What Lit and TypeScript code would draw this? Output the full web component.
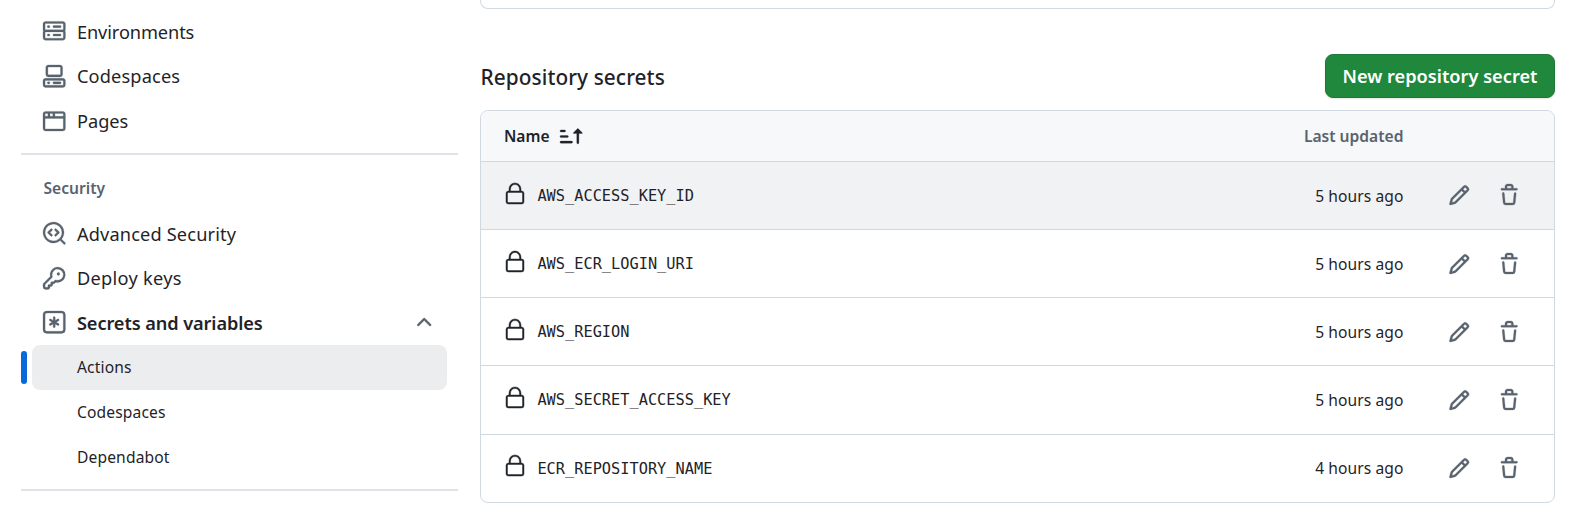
import { LitElement, html, css, svg } from "lit";
import { customElement, property } from "lit/decorators.js";

const ICONS: Record<string, string> = {
  server:
    "M1.75 1h12.5c.966 0 1.75.784 1.75 1.75v4c0 .372-.116.717-.314 1 .198.283.314.628.314 1v4a1.75 1.75 0 0 1-1.75 1.75H1.75A1.75 1.75 0 0 1 0 12.75v-4c0-.358.109-.707.314-1a1.739 1.739 0 0 1-.314-1v-4C0 1.784.784 1 1.75 1ZM1.5 2.75v4c0 .138.112.25.25.25h12.5a.25.25 0 0 0 .25-.25v-4a.25.25 0 0 0-.25-.25H1.75a.25.25 0 0 0-.25.25Zm.25 5.75a.25.25 0 0 0-.25.25v4c0 .138.112.25.25.25h12.5a.25.25 0 0 0 .25-.25v-4a.25.25 0 0 0-.25-.25ZM7 4.75A.75.75 0 0 1 7.75 4h4.5a.75.75 0 0 1 0 1.5h-4.5A.75.75 0 0 1 7 4.75ZM7.75 10h4.5a.75.75 0 0 1 0 1.5h-4.5a.75.75 0 0 1 0-1.5ZM3 4.75A.75.75 0 0 1 3.75 4h.5a.75.75 0 0 1 0 1.5h-.5A.75.75 0 0 1 3 4.75ZM3.75 10h.5a.75.75 0 0 1 0 1.5h-.5a.75.75 0 0 1 0-1.5Z",
  codespaces:
    "M0 11.25c0-.966.784-1.75 1.75-1.75h12.5c.966 0 1.75.784 1.75 1.75v3A1.75 1.75 0 0 1 14.25 16H1.75A1.75 1.75 0 0 1 0 14.25Zm2-9.5C2 .784 2.784 0 3.75 0h8.5C13.216 0 14 .784 14 1.75v5a1.75 1.75 0 0 1-1.75 1.75h-8.5A1.75 1.75 0 0 1 2 6.75Zm1.75-.25a.25.25 0 0 0-.25.25v5c0 .138.112.25.25.25h8.5a.25.25 0 0 0 .25-.25v-5a.25.25 0 0 0-.25-.25Zm-2 9.5a.25.25 0 0 0-.25.25v3c0 .138.112.25.25.25h12.5a.25.25 0 0 0 .25-.25v-3a.25.25 0 0 0-.25-.25ZM7 12.75a.75.75 0 0 1 .75-.75h4.5a.75.75 0 0 1 0 1.5h-4.5a.75.75 0 0 1-.75-.75Zm-4 0a.75.75 0 0 1 .75-.75h.5a.75.75 0 0 1 0 1.5h-.5a.75.75 0 0 1-.75-.75Z",
  browser:
    "M0 2.75C0 1.784.784 1 1.75 1h12.5c.966 0 1.75.784 1.75 1.75v10.5A1.75 1.75 0 0 1 14.25 15H1.75A1.75 1.75 0 0 1 0 13.25ZM14.5 6h-13v7.25c0 .138.112.25.25.25h12.5a.25.25 0 0 0 .25-.25Zm-6-3.5v2h6V2.75a.25.25 0 0 0-.25-.25ZM5 2.5v2h2v-2Zm-3.25 0a.25.25 0 0 0-.25.25V4.5h2v-2Z",
  codescan:
    "M8.47 4.97a.75.75 0 0 0 0 1.06L9.94 7.5 8.47 8.97a.75.75 0 1 0 1.06 1.06l2-2a.75.75 0 0 0 0-1.06l-2-2a.75.75 0 0 0-1.06 0ZM6.53 6.03a.75.75 0 0 0-1.06-1.06l-2 2a.75.75 0 0 0 0 1.06l2 2a.75.75 0 1 0 1.06-1.06L5.06 7.5l1.47-1.47ZM12.246 13.307a7.501 7.501 0 1 1 1.06-1.06l2.474 2.473a.749.749 0 0 1-.326 1.275.749.749 0 0 1-.734-.215ZM1.5 7.5a6.002 6.002 0 0 0 3.608 5.504 6.002 6.002 0 0 0 6.486-1.117.748.748 0 0 1 .292-.293A6 6 0 1 0 1.5 7.5Z",
  key:
    "M10.5 0a5.499 5.499 0 1 1-1.288 10.848l-.932.932a.749.749 0 0 1-.53.22H7v.75a.749.749 0 0 1-.22.53l-.5.5a.749.749 0 0 1-.53.22H5v.75a.749.749 0 0 1-.22.53l-.5.5a.749.749 0 0 1-.53.22h-2A1.75 1.75 0 0 1 0 14.25v-2c0-.199.079-.389.22-.53l4.932-4.932A5.5 5.5 0 0 1 10.5 0Zm-4 5.5c-.001.431.069.86.205 1.269a.75.75 0 0 1-.181.768L1.5 12.56v1.69c0 .138.112.25.25.25h1.69l.06-.06v-1.19a.75.75 0 0 1 .75-.75h1.19l.06-.06v-1.19a.75.75 0 0 1 .75-.75h1.19l1.023-1.025a.75.75 0 0 1 .768-.18A4 4 0 1 0 6.5 5.5ZM11 6a1 1 0 1 1 0-2 1 1 0 0 1 0 2Z",
  asterisk:
    "M0 2.75A2.75 2.75 0 0 1 2.75 0h10.5A2.75 2.75 0 0 1 16 2.75v10.5A2.75 2.75 0 0 1 13.25 16H2.75A2.75 2.75 0 0 1 0 13.25ZM2.75 1.5c-.69 0-1.25.56-1.25 1.25v10.5c0 .69.56 1.25 1.25 1.25h10.5c.69 0 1.25-.56 1.25-1.25V2.75c0-.69-.56-1.25-1.25-1.25ZM8 4a.75.75 0 0 1 .75.75V6.7l1.69-.975a.75.75 0 0 1 .75 1.3L9.5 8l1.69.976a.75.75 0 0 1-.75 1.298L8.75 9.3v1.951a.75.75 0 0 1-1.5 0V9.299l-1.69.976a.75.75 0 0 1-.75-1.3L6.5 8l-1.69-.975a.75.75 0 0 1 .75-1.3l1.69.976V4.75A.75.75 0 0 1 8 4Z",
  chevron:
    "M3.22 10.53a.749.749 0 0 1 0-1.06l4.25-4.25a.749.749 0 0 1 1.06 0l4.25 4.25a.749.749 0 1 1-1.06 1.06L8 6.811 4.28 10.53a.749.749 0 0 1-1.06 0Z",
  pencil:
    "M11.013 1.427a1.75 1.75 0 0 1 2.474 0l1.086 1.086a1.75 1.75 0 0 1 0 2.474l-8.61 8.61c-.21.21-.47.364-.756.445l-3.251.93a.75.75 0 0 1-.927-.928l.929-3.25c.081-.286.235-.547.445-.758l8.61-8.61Zm.176 4.823L9.75 4.81l-6.286 6.287a.253.253 0 0 0-.064.108l-.558 1.953 1.953-.558a.253.253 0 0 0 .108-.064Zm1.238-3.763a.25.25 0 0 0-.354 0L10.811 3.75l1.439 1.44 1.263-1.263a.25.25 0 0 0 0-.354Z",
  trash:
    "M11 1.75V3h2.25a.75.75 0 0 1 0 1.5H2.75a.75.75 0 0 1 0-1.5H5V1.75C5 .784 5.784 0 6.75 0h2.5C10.216 0 11 .784 11 1.75ZM4.496 6.675l.66 6.6a.25.25 0 0 0 .249.225h5.19a.25.25 0 0 0 .249-.225l.66-6.6a.75.75 0 0 1 1.492.149l-.66 6.6A1.748 1.748 0 0 1 10.595 15h-5.19a1.75 1.75 0 0 1-1.741-1.575l-.66-6.6a.75.75 0 1 1 1.492-.15ZM6.5 1.75V3h3V1.75a.25.25 0 0 0-.25-.25h-2.5a.25.25 0 0 0-.25.25Z",
  sort:
    "m12.927 2.573 3 3A.25.25 0 0 1 15.75 6H13.5v6.75a.75.75 0 0 1-1.5 0V6H9.75a.25.25 0 0 1-.177-.427l3-3a.25.25 0 0 1 .354 0ZM0 12.25a.75.75 0 0 1 .75-.75h7.5a.75.75 0 0 1 0 1.5H.75a.75.75 0 0 1-.75-.75Zm0-4a.75.75 0 0 1 .75-.75h4.5a.75.75 0 0 1 0 1.5H.75a.75.75 0 0 1-.75-.75Zm0-4a.75.75 0 0 1 .75-.75h2.5a.75.75 0 0 1 0 1.5H.75a.75.75 0 0 1-.75-.75Z",
  lock:
    "M6 9V7.25C6 3.845 8.503 1 12 1s6 2.845 6 6.25V9h.5a2.5 2.5 0 0 1 2.5 2.5v8a2.5 2.5 0 0 1-2.5 2.5h-13A2.5 2.5 0 0 1 3 19.5v-8A2.5 2.5 0 0 1 5.5 9Zm-1.5 2.5v8a1 1 0 0 0 1 1h13a1 1 0 0 0 1-1v-8a1 1 0 0 0-1-1h-13a1 1 0 0 0-1 1Zm3-4.25V9h9V7.25c0-2.67-1.922-4.75-4.5-4.75-2.578 0-4.5 2.08-4.5 4.75Z",
};

@customElement("app-icon")
class AppIcon extends LitElement {
  @property() name = "";
  static styles = css`
    :host {
      display: block;
      flex: none;
      width: 22.4px;
      height: 22.4px;
    }
    .glyph {
      display: block;
      width: 100%;
      height: 100%;
      overflow: visible;
      fill: currentColor;
      stroke: currentColor;
      stroke-width: 0.2;
    }
    .heavy {
      stroke-width: 0.45;
    }
  `;
  render() {
    const lock = this.name === "lock";
    const box = lock ? 24 : 16;
    return html`<svg class="glyph ${lock ? "heavy" : ""}" viewBox="0 0 ${box} ${box}" aria-hidden="true">
      ${svg`<path d=${ICONS[this.name]}></path>`}
    </svg>`;
  }
}

@customElement("settings-nav")
class SettingsNav extends LitElement {
  static styles = css`
    :host {
      display: block;
      width: 437px;
      padding: 9px 0 0 21px;
      color: #1f2328;
      font-size: 18.2px;
    }
    .item {
      display: flex;
      align-items: center;
      height: 44.8px;
      padding: 0 22px;
      line-height: 28px;
    }
    .item app-icon {
      color: #59636e;
      margin: -0.6px 11.4px 0 0.2px;
    }
    .label {
      flex: 1;
      padding-top: 0.4px;
    }
    .snug {
      letter-spacing: -0.1px;
    }
    .loose {
      letter-spacing: 0.15px;
    }
    .wide {
      letter-spacing: 0.28px;
    }
    .item .chevron {
      margin-right: 1px;
    }
    .current {
      font-weight: 600;
    }
    .divider {
      height: 2px;
      background: #dfe3e8;
      margin-top: 9.6px;
    }
    .heading {
      padding: 21px 22px 0 22.5px;
      height: 35px;
      font-size: 15.6px;
      font-weight: 600;
      line-height: 25px;
      color: #59636e;
    }
    .sub {
      display: flex;
      align-items: center;
      height: 44.8px;
      font-size: 15.6px;
      letter-spacing: 0.14px;
    }
    .marker {
      width: 6px;
      height: 33px;
      border-radius: 4px;
      margin-right: 5px;
    }
    .target {
      box-sizing: border-box;
      display: flex;
      align-items: center;
      width: 415px;
      height: 45px;
      padding: 0 0 1.6px 45px;
      border-radius: 8px;
    }
    .active .marker {
      background: #0969da;
    }
    .active .target {
      background: #ecedef;
    }
  `;
  private item(icon: string, label: string, tracking = "") {
    return html`<div class="item">
      <app-icon name=${icon}></app-icon><span class="label ${tracking}">${label}</span>
    </div>`;
  }
  private sub(label: string, active = false) {
    return html`<div class="sub ${active ? "active" : ""}">
      <span class="marker"></span><span class="target">${label}</span>
    </div>`;
  }
  render() {
    return html`
      ${this.item("server", "Environments", "snug")}
      ${this.item("codespaces", "Codespaces", "loose")}
      ${this.item("browser", "Pages")}
      <div class="divider"></div>
      <div class="heading">Security</div>
      ${this.item("codescan", "Advanced Security", "loose")}
      ${this.item("key", "Deploy keys", "wide")}
      <div class="item">
        <app-icon name="asterisk"></app-icon>
        <span class="label current snug">Secrets and variables</span>
        <app-icon class="chevron" name="chevron"></app-icon>
      </div>
      ${this.sub("Actions", true)} ${this.sub("Codespaces")} ${this.sub("Dependabot")}
      <div class="divider"></div>
    `;
  }
}

@customElement("secrets-panel")
class SecretsPanel extends LitElement {
  static styles = css`
    :host {
      display: block;
      width: 1075px;
      color: #1f2328;
      font-size: 15.6px;
    }
    .previous {
      box-sizing: border-box;
      height: 9px;
      border: 1px solid #d1d9e0;
      border-top: 0;
      border-radius: 0 0 8px 8px;
    }
    .top {
      display: flex;
      align-items: center;
      justify-content: space-between;
      margin: 45px 0 12px;
    }
    .title {
      margin: 0;
      padding: 2px 0 0 0.5px;
      font-size: 20.8px;
      font-weight: 550;
      line-height: 30px;
      letter-spacing: 0.08px;
    }
    .create {
      box-sizing: border-box;
      width: 230px;
      height: 44px;
      padding: 0;
      border: 1px solid #1f783a;
      border-radius: 8px;
      background: #1f883d;
      color: #fff;
      font: 600 18.2px/28px "Noto Sans", "Open Sans", sans-serif;
      box-shadow: 0 1px 2px rgba(31, 35, 40, 0.12);
    }
    .table {
      border: 1px solid #d1d9e0;
      border-radius: 8px;
      overflow: hidden;
    }
    .row {
      display: grid;
      grid-template-columns: 1fr 250px 44.6px 22.4px 27.6px 22.4px;
      align-items: center;
      height: 67.15px;
      padding: 0 33.6px 0 23px;
      border-top: 1px solid #d1d9e0;
    }
    .head {
      height: 50px;
      border-top: 0;
      background: #f6f8fa;
      font-weight: 600;
    }
    .hovered {
      background: #f1f2f4;
    }
    .name {
      display: flex;
      align-items: center;
    }
    .head .name {
      gap: 10px;
    }
    .lock {
      width: 24px;
      height: 24px;
      margin: -4px 10.4px 0 -1px;
    }
    .secret {
      font-family: "DejaVu Sans Mono", monospace;
      font-size: 15.3px;
      padding-top: 1px;
    }
    .when {
      grid-column: 2;
      text-align: right;
      letter-spacing: 0.07px;
    }
    .head .when {
      color: #59636e;
      letter-spacing: 0;
    }
    .edit {
      grid-column: 4;
      color: #59636e;
    }
    .remove {
      grid-column: 6;
      color: #59636e;
    }
  `;
  private secrets = [
    { name: "AWS_ACCESS_KEY_ID", when: "5 hours ago" },
    { name: "AWS_ECR_LOGIN_URI", when: "5 hours ago" },
    { name: "AWS_REGION", when: "5 hours ago" },
    { name: "AWS_SECRET_ACCESS_KEY", when: "5 hours ago" },
    { name: "ECR_REPOSITORY_NAME", when: "4 hours ago" },
  ];
  render() {
    return html`
      <div class="previous"></div>
      <div class="top">
        <h2 class="title">Repository secrets</h2>
        <button class="create">New repository secret</button>
      </div>
      <div class="table">
        <div class="row head">
          <span class="name">Name<app-icon name="sort"></app-icon></span>
          <span class="when">Last updated</span>
        </div>
        ${this.secrets.map(
          (s, i) => html`<div class="row ${i === 0 ? "hovered" : ""}">
            <span class="name"><app-icon class="lock" name="lock"></app-icon><span class="secret">${s.name}</span></span>
            <span class="when">${s.when}</span>
            <app-icon class="edit" name="pencil"></app-icon>
            <app-icon class="remove" name="trash"></app-icon>
          </div>`
        )}
      </div>
    `;
  }
}

@customElement("app-root")
class AppRoot extends LitElement {
  static styles = css`
    :host {
      display: flex;
      gap: 22px;
      width: 1590px;
      height: 514px;
      overflow: hidden;
      background: #fff;
      font-family: "Noto Sans", "Open Sans", sans-serif;
    }
  `;
  render() {
    return html`<settings-nav></settings-nav><secrets-panel></secrets-panel>`;
  }
}
